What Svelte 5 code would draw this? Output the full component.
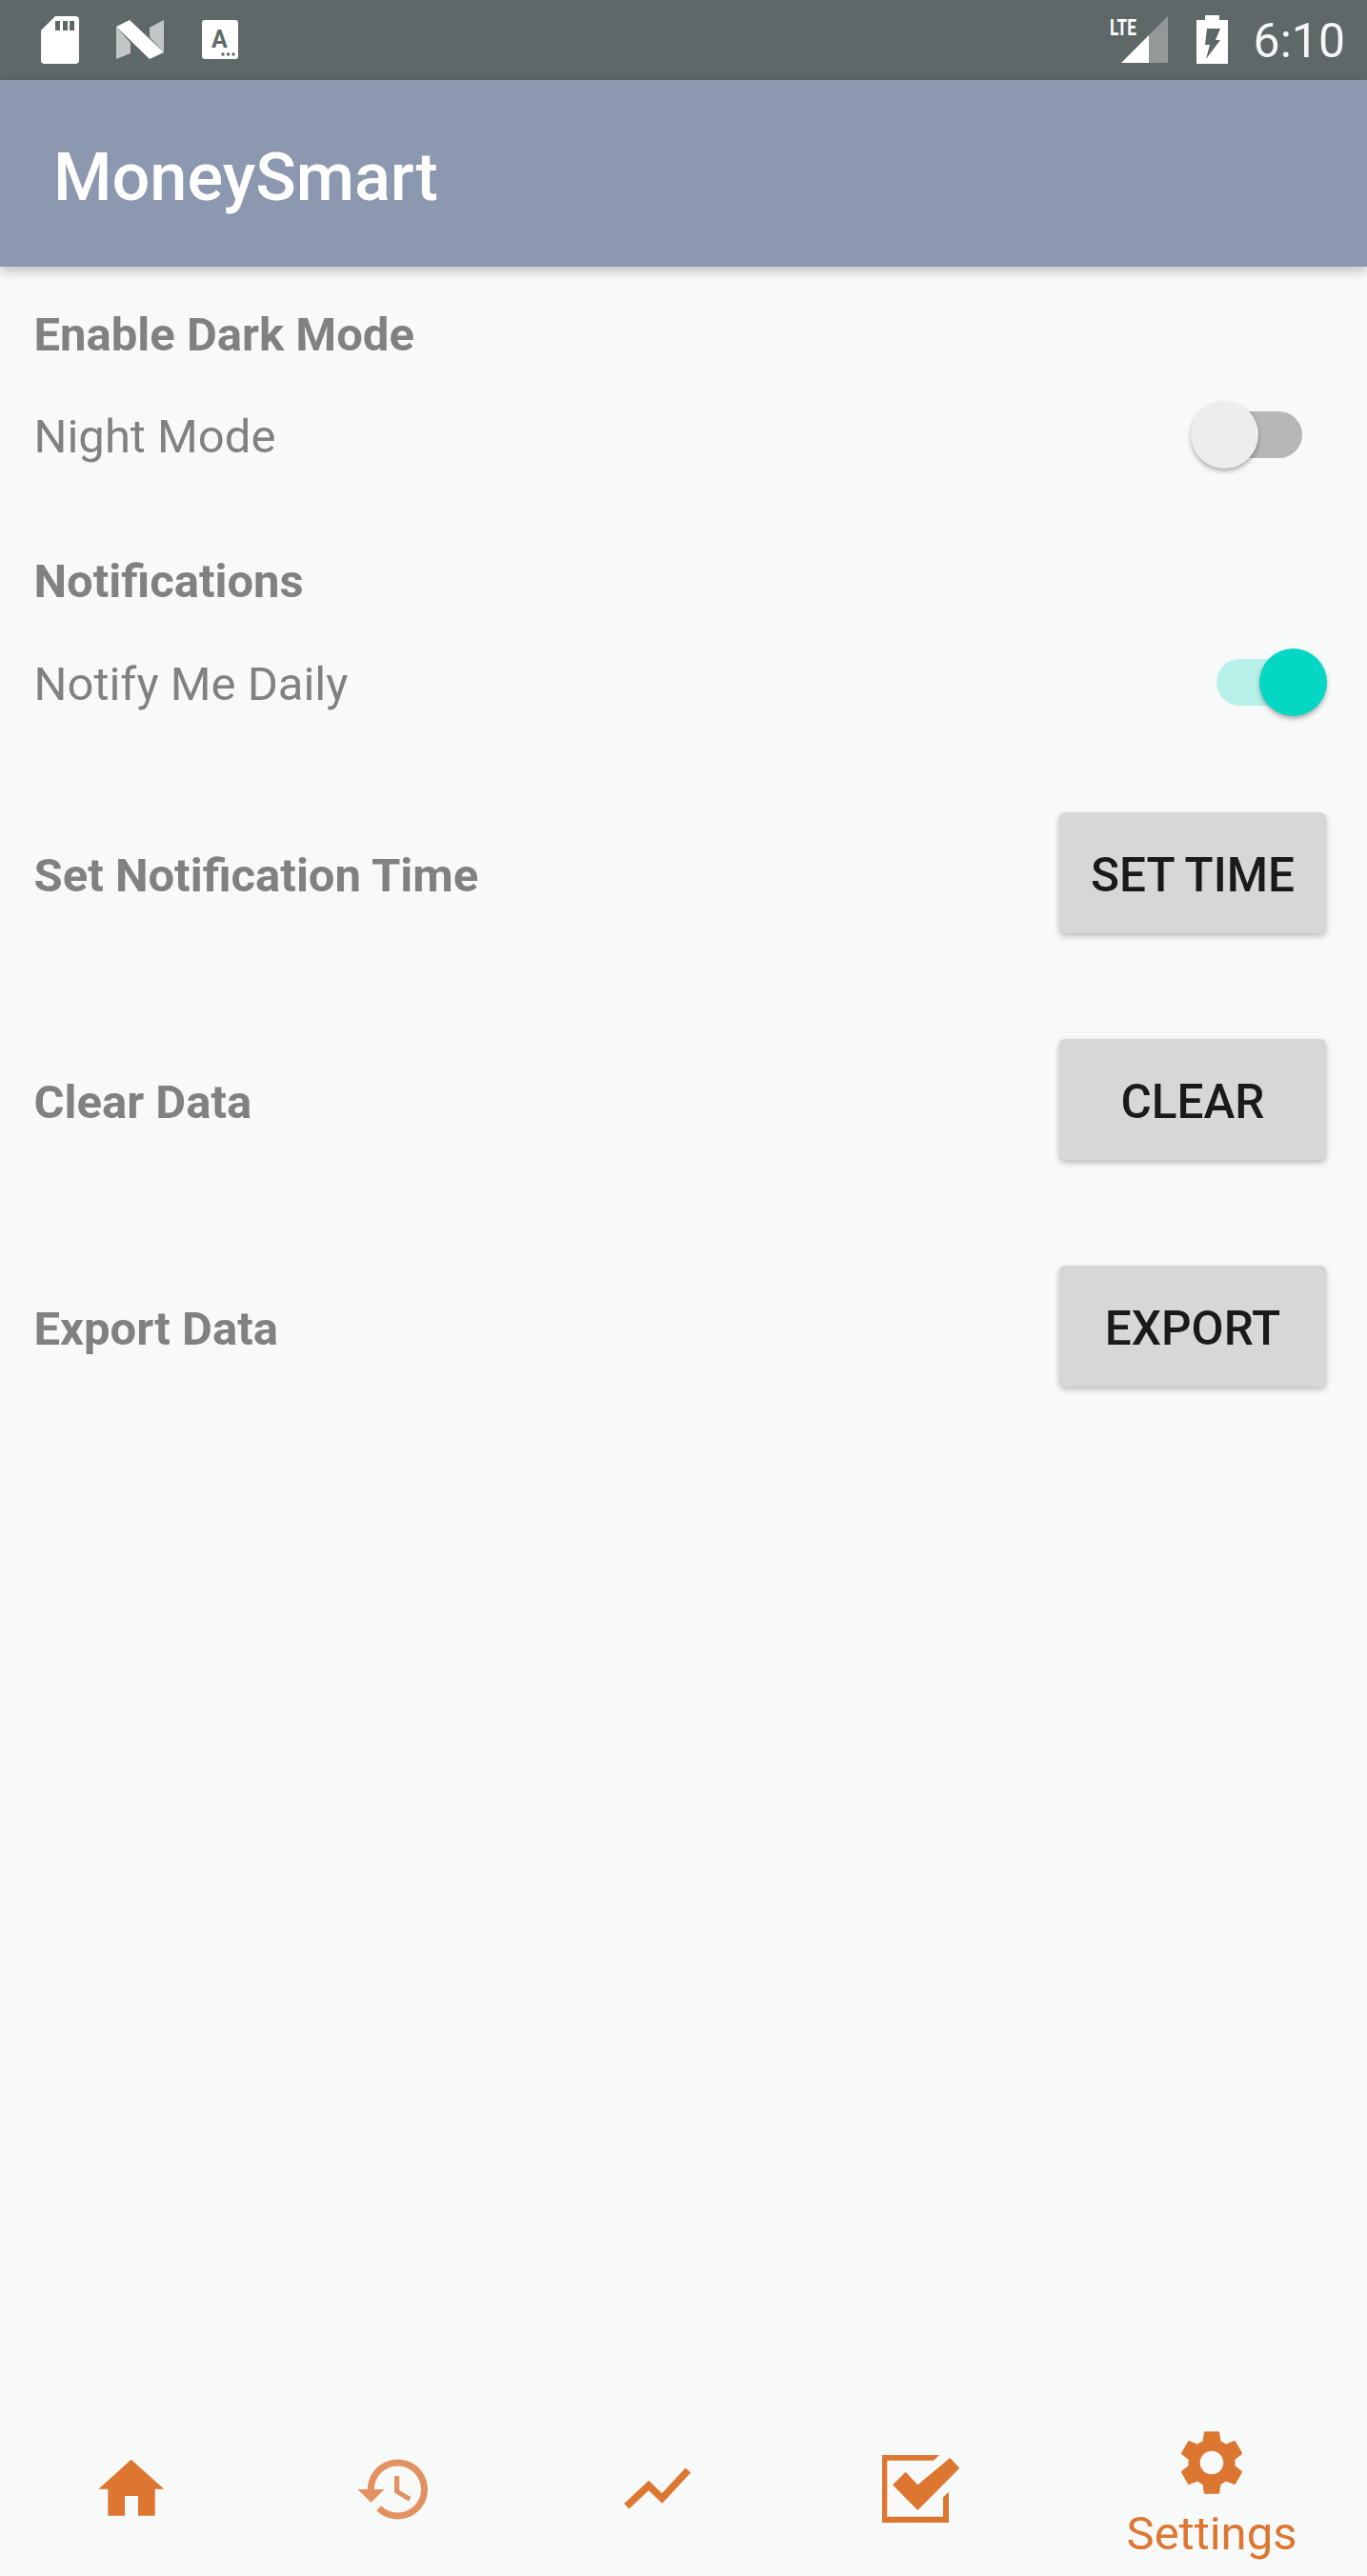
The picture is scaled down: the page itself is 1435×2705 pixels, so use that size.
<script>
  let night_mode = false;
  let notify_daily = true;

  const actions = [
    { label: 'Set Notification Time', button: 'SET TIME' },
    { label: 'Clear Data', button: 'CLEAR' },
    { label: 'Export Data', button: 'EXPORT' }
  ];

  const gear_path = 'M19.14 12.94c.04-.3.06-.61.06-.94 0-.32-.02-.64-.07-.94l2.03-1.58c.18-.14.23-.41.12-.61l-1.92-3.32c-.12-.22-.37-.29-.59-.22l-2.39.96c-.5-.38-1.03-.7-1.62-.94l-.36-2.54c-.04-.24-.24-.41-.48-.41h-3.84c-.24 0-.43.17-.47.41l-.36 2.54c-.59.24-1.13.57-1.62.94l-2.39-.96c-.22-.08-.47 0-.59.22L2.74 8.87c-.12.21-.08.47.12.61l2.03 1.58c-.05.3-.09.63-.09.94s.02.64.07.94l-2.03 1.58c-.18.14-.23.41-.12.61l1.92 3.32c.12.22.37.29.59.22l2.39-.96c.5.38 1.03.7 1.62.94l.36 2.54c.05.24.24.41.48.41h3.84c.24 0 .44-.17.47-.41l.36-2.54c.59-.24 1.13-.56 1.62-.94l2.39.96c.22.08.47 0 .59-.22l1.92-3.32c.12-.22.07-.47-.12-.61l-2.01-1.58zM12 15.6c-1.98 0-3.6-1.62-3.6-3.6s1.62-3.6 3.6-3.6 3.6 1.62 3.6 3.6-1.62 3.6-3.6 3.6z';
  const history_path = 'M13 3c-4.97 0-9 4.03-9 9H1l3.89 3.89.07.14L9 12H6c0-3.87 3.13-7 7-7s7 3.13 7 7-3.13 7-7 7c-1.93 0-3.68-.79-4.94-2.06l-1.42 1.42C8.27 19.99 10.51 21 13 21c4.97 0 9-4.03 9-9s-4.03-9-9-9zm-1 5v5l4.28 2.54.72-1.21-3.5-2.08V8H12z';
</script>

<div class="page">
  <div class="status">
    <svg class="sd" width="40" height="50" viewBox="0 0 40 50">
      <path fill="#fff" d="M15 0H36a4 4 0 0 1 4 4V46a4 4 0 0 1-4 4H4a4 4 0 0 1-4-4V15z" />
      <path fill="#5f6869" d="M15 5h5v10h-5zM23 5h5v10h-5zM30 5h5v10h-5z" />
    </svg>
    <svg class="nougat" width="50" height="41" viewBox="0 0 50 41">
      <polygon fill="#c2c6c6" points="0,7 15,24 15,35 0,41" />
      <polygon fill="#c2c6c6" points="35,8 50,0 50,34 35,18" />
      <polygon fill="#fff" points="0,7 14,0 50,34 35,41" />
    </svg>
    <svg class="keyboard" width="38" height="41" viewBox="0 0 38 41">
      <rect width="38" height="41" rx="3" fill="#fff" />
      <text x="18.5" y="29" text-anchor="middle" class="key_letter">A</text>
      <circle cx="22" cy="36" r="1.7" fill="#5f6869" />
      <circle cx="27.5" cy="36" r="1.7" fill="#5f6869" />
      <circle cx="33" cy="36" r="1.7" fill="#5f6869" />
    </svg>
    <span class="spacer"></span>
    <span class="lte">LTE</span>
    <svg class="signal" width="49" height="49" viewBox="0 0 49 49">
      <polygon fill="#939999" points="49,0 49,49 29,49 29,20" />
      <polygon fill="#fff" points="29,20 29,49 0,49" />
    </svg>
    <svg class="battery" width="33" height="51" viewBox="0 0 33 51">
      <path fill="#fff" d="M9 0h15v5h9v46H0V5h9z" />
      <polygon fill="#5f6869" points="11,14 25,14 20,26 25,26 10,46 14,31 9,31" />
    </svg>
    <span class="time">6:10</span>
  </div>

  <header class="app_bar">MoneySmart</header>

  <main class="settings">
    <h2 class="heading first">Enable Dark Mode</h2>
    <div class="switch_row">
      <span class="option">Night Mode</span>
      <span class="switch" class:on={night_mode}><span class="track"></span><span class="thumb"></span></span>
    </div>

    <h2 class="heading second">Notifications</h2>
    <div class="switch_row notify_row">
      <span class="option">Notify Me Daily</span>
      <span class="switch" class:on={notify_daily}><span class="track"></span><span class="thumb"></span></span>
    </div>

    <div class="actions">
      {#each actions as action}
        <div class="action_row">
          <span class="heading action_label">{action.label}</span>
          <button class="action_button">{action.button}</button>
        </div>
      {/each}
    </div>
  </main>

  <nav class="bottom_nav">
    <div class="nav_item">
      <svg width="84" height="84" viewBox="0 0 84 84">
        <path fill="#dc7631" d="M41.700 10.700L76.300 41.700H66.700V69.700H49V49H35V69.700H17.300V41.700H7.300z" />
      </svg>
    </div>
    <div class="nav_item">
      <svg width="84" height="84" viewBox="0 0 24 24">
        <path fill="#e39160" d={history_path} />
      </svg>
    </div>
    <div class="nav_item">
      <svg width="84" height="84" viewBox="0 0 84 84">
        <polyline fill="none" stroke="#dc7631" stroke-width="7.500" points="9.700,59.700 33,38 47,51.500 74.300,22" />
      </svg>
    </div>
    <div class="nav_item">
      <svg width="84" height="84" viewBox="0 0 84 84">
        <path fill="#dc7631" d="M2 6H62L56 11.700H7.300V70.700H66V50.300L72 44.700V77H2z" />
        <polygon fill="#dc7631" points="13,37.300 26.700,23.700 39.300,37.300 73.300,9 83.300,19.700 39.300,64" />
      </svg>
    </div>
    <div class="nav_item active">
      <svg width="82" height="82" viewBox="0 0 24 24">
        <path fill="#dc7631" d={gear_path} />
      </svg>
      <span class="nav_label">Settings</span>
    </div>
  </nav>
</div>

<style>
  :global(body) {
    margin: 0;
    background: #f8faf9;
  }

  .page {
    display: flex;
    flex-direction: column;
    height: 2705px;
    background: #f8faf9;
    font-family: Roboto, "Noto Sans", sans-serif;
    overflow: hidden;
  }

  .status {
    display: flex;
    align-items: flex-start;
    flex: none;
    height: 84px;
    background: #5f6869;
    padding-left: 43px;
    padding-right: 23px;
    box-sizing: border-box;
    color: #fff;
  }

  .sd {
    margin-top: 17px;
  }

  .nougat {
    margin-top: 21px;
    margin-left: 39px;
  }

  .keyboard {
    margin-top: 21px;
    margin-left: 40px;
  }

  .key_letter {
    font-family: Roboto, sans-serif;
    font-size: 25px;
    font-weight: 700;
    fill: #5f6869;
  }

  .spacer {
    flex: 1;
  }

  .lte {
    font-size: 24px;
    font-weight: 700;
    line-height: 24px;
    margin-top: 17px;
    margin-right: -19px;
    transform: scaleX(0.72);
    transform-origin: left top;
    width: 31px;
  }

  .signal {
    margin-top: 17px;
  }

  .battery {
    margin-top: 16px;
    margin-left: 30px;
  }

  .time {
    font-size: 50px;
    line-height: 58px;
    margin-top: 14px;
    margin-left: 27px;
    color: #f5f6f6;
  }

  .app_bar {
    flex: none;
    position: relative;
    height: 196px;
    box-sizing: border-box;
    padding: 61px 0 0 56px;
    background: #8c98b0;
    color: #fff;
    font-size: 70.300px;
    font-weight: 500;
    line-height: 82px;
    box-shadow: 0 4px 12px rgba(0, 0, 0, 0.25);
  }

  .settings {
    flex: 1;
    padding: 0 42px 0 35.500px;
    color: #808281;
  }

  .heading {
    margin: 0;
    font-size: 49px;
    font-weight: 700;
    line-height: 56px;
  }

  .first {
    margin-top: 44px;
  }

  .second {
    margin-top: 91px;
  }

  .switch_row {
    display: flex;
    align-items: center;
    justify-content: space-between;
    height: 72px;
    margin-top: 40px;
  }

  .notify_row {
    margin-top: 41px;
  }

  .option {
    font-size: 49px;
    line-height: 56px;
    padding-top: 6px;
  }

  .switch {
    position: relative;
    display: block;
    width: 143px;
    height: 71px;
  }

  .track {
    position: absolute;
    left: 27px;
    top: 11px;
    width: 90px;
    height: 49px;
    border-radius: 25px;
    background: #b6b8b7;
  }

  .thumb {
    position: absolute;
    left: 0;
    top: 0;
    width: 71px;
    height: 71px;
    border-radius: 50%;
    background: #ededed;
    box-shadow: 0 3px 5px rgba(0, 0, 0, 0.3);
  }

  .switch.on .track {
    background: #b7f1ea;
  }

  .switch.on .thumb {
    left: 72px;
    background: #04d7c3;
  }

  .actions {
    display: flex;
    flex-direction: column;
    gap: 111px;
    margin-top: 101px;
  }

  .action_row {
    display: flex;
    align-items: center;
    justify-content: space-between;
    height: 127px;
  }

  .action_label {
    padding-top: 6px;
  }

  .action_button {
    width: 280px;
    height: 127px;
    margin: 0 1px 0 0;
    padding: 4px 0 0;
    border: 0;
    border-radius: 6px;
    background: #d6d8d8;
    color: #1a1a1a;
    font-family: inherit;
    font-size: 49.500px;
    font-weight: 500;
    box-shadow: 0 3px 6px rgba(0, 0, 0, 0.25);
  }

  .bottom_nav {
    display: grid;
    grid-template-columns: repeat(4, 276px) 331px;
    flex: none;
    height: 182px;
  }

  .nav_item {
    display: flex;
    align-items: center;
    justify-content: center;
  }

  .active {
    flex-direction: column;
    justify-content: flex-start;
    padding-left: 5px;
    padding-top: 22px;
  }

  .nav_label {
    color: #dc7631;
    font-size: 49px;
    line-height: 54px;
    margin-top: 7px;
  }
</style>
